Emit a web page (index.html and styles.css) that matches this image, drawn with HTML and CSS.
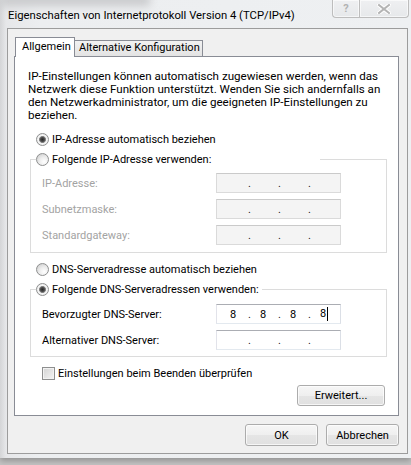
FILE: index.html
```html
<!DOCTYPE html>
<html lang="de">
<head>
  <meta charset="UTF-8" />
  <title>Eigenschaften von Internetprotokoll Version 4 (TCP/IPv4)</title>
  <link rel="stylesheet" href="styles.css">
</head>
<body>
  <div class="window">
    <div class="titlebar">
      <div class="glass-blur"></div>
      <span class="title">Eigenschaften von Internetprotokoll Version 4 (TCP/IPv4)</span>
      <div class="caption-btns">
        <div class="cap help">?</div>
        <div class="cap close">
          <svg width="14" height="10" viewBox="0 0 14 10">
            <path d="M2 1 L12 9 M12 1 L2 9" stroke="#ffffff" stroke-width="4" stroke-linecap="square" />
            <path d="M2 1 L12 9 M12 1 L2 9" stroke="#b4b4b4" stroke-width="2" stroke-linecap="square" />
          </svg>
        </div>
      </div>
    </div>

    <div class="client">
      <div class="tabs">
        <div class="tab active">Allgemein</div>
        <div class="tab">Alternative Konfiguration</div>
      </div>

      <div class="panel">
        <p class="intro">IP-Einstellungen können automatisch zugewiesen werden, wenn das<br>Netzwerk diese Funktion unterstützt. Wenden Sie sich andernfalls an<br>den Netzwerkadministrator, um die geeigneten IP-Einstellungen zu<br>beziehen.</p>

        <div class="option"><span class="radio on"></span>IP-Adresse automatisch beziehen</div>

        <fieldset class="group">
          <legend class="option ip-legend"><span class="radio"></span>Folgende IP-Adresse verwenden:</legend>
          <div class="field disabled">
            <span class="label">IP-Adresse:</span>
            <span class="ipbox"><span class="part"></span><span class="dot">.</span><span class="part"></span><span class="dot">.</span><span class="part"></span><span class="dot">.</span><span class="part"></span></span>
          </div>
          <div class="field disabled">
            <span class="label">Subnetzmaske:</span>
            <span class="ipbox"><span class="part"></span><span class="dot">.</span><span class="part"></span><span class="dot">.</span><span class="part"></span><span class="dot">.</span><span class="part"></span></span>
          </div>
          <div class="field disabled">
            <span class="label">Standardgateway:</span>
            <span class="ipbox"><span class="part"></span><span class="dot">.</span><span class="part"></span><span class="dot">.</span><span class="part"></span><span class="dot">.</span><span class="part"></span></span>
          </div>
        </fieldset>

        <div class="option dns-auto"><span class="radio"></span>DNS-Serveradresse automatisch beziehen</div>

        <fieldset class="group dns">
          <legend class="option dns-legend"><span class="radio on"></span>Folgende DNS-Serveradressen verwenden:</legend>
          <div class="field">
            <span class="label">Bevorzugter DNS-Server:</span>
            <span class="ipbox"><span class="part">8</span><span class="dot">.</span><span class="part">8</span><span class="dot">.</span><span class="part">8</span><span class="dot">.</span><span class="part">8<span class="caret"></span></span></span>
          </div>
          <div class="field">
            <span class="label">Alternativer DNS-Server:</span>
            <span class="ipbox"><span class="part"></span><span class="dot">.</span><span class="part"></span><span class="dot">.</span><span class="part"></span><span class="dot">.</span><span class="part"></span></span>
          </div>
        </fieldset>

        <div class="check-row"><span class="check"></span>Einstellungen beim Beenden überprüfen</div>

        <div class="panel-actions">
          <button class="btn wide">Erweitert...</button>
        </div>
      </div>

      <div class="dialog-actions">
        <button class="btn">OK</button>
        <button class="btn">Abbrechen</button>
      </div>
    </div>
  </div>
</body>
</html>
```

FILE: styles.css
```css
* {
  box-sizing: border-box;
  margin: 0;
  padding: 0;
}

body {
  width: 411px;
  height: 465px;
  overflow: hidden;
  font-family: Roboto, 'Noto Sans', sans-serif;
  font-size: 11px;
  color: #000;
  background: #c4c4c4;
}

/* glass frame */
.window {
  width: 411px;
  height: 458px;
  background: linear-gradient(90deg, #d4d5d7 0, #e6e7e9 6px, #eceef0 40px, #eef0f2 100%);
  box-shadow: 0 3px 6px rgba(0, 0, 0, 0.25);
  overflow: hidden;
}

.titlebar {
  position: relative;
  height: 28px;
  display: flex;
  align-items: flex-start;
}

.glass-blur {
  position: absolute;
  left: 0;
  top: -6px;
  width: 150px;
  height: 12px;
  background: #c9cacc;
  filter: blur(4px);
}

.title {
  position: relative;
  margin: 8px 0 0 8px;
  font-size: 11.3px;
  line-height: 16px;
  white-space: nowrap;
}

.caption-btns {
  position: relative;
  display: flex;
  margin: 0 2px 0 auto;
}

.cap {
  height: 18px;
  border: 1px solid #bdbdbd;
  border-top: none;
  background: linear-gradient(#eff0f2, #e6e8ea);
  box-shadow: inset 0 0 0 1px rgba(255, 255, 255, 0.6);
  display: flex;
  align-items: center;
  justify-content: center;
  color: #b2b2b2;
  font-weight: bold;
  font-size: 11px;
}

.cap.help {
  width: 27px;
  border-right: none;
  border-radius: 0 0 0 4px;
}

.cap.close {
  width: 50px;
  border-radius: 0 0 4px 0;
}

/* client area */
.client {
  width: 401px;
  height: 426px;
  margin-left: 7px;
  background: #f0f0f0;
  border: 1px solid #9c9c9c;
}

.tabs {
  display: flex;
  align-items: flex-end;
  margin: 8px 0 0 7px;
  position: relative;
  z-index: 1;
}

.tab {
  width: 129px;
  height: 16px;
  padding: 0 0 0 4px;
  line-height: 14px;
  border: 1px solid #898c95;
  border-bottom: none;
  background: linear-gradient(#f2f2f2, #e3e3e3);
  margin-left: -1px;
  white-space: nowrap;
}

.tab.active {
  height: 20px;
  width: 60px;
  margin-left: 0;
  margin-bottom: -1px;
  padding: 2px 0 0 6px;
  background: #fff;
  position: relative;
  z-index: 2;
}

.panel {
  width: 385px;
  height: 360px;
  margin-left: 6px;
  background: #fff;
  border: 1px solid #898c95;
  padding: 13px 13px 0 0;
  display: flex;
  flex-direction: column;
}

.intro {
  margin-left: 13px;
  font-size: 11.6px;
  line-height: 13px;
  white-space: nowrap;
}

.option {
  display: flex;
  align-items: center;
  height: 20px;
  margin: 7px 0 0 21px;
  white-space: nowrap;
}

.radio {
  width: 13px;
  height: 13px;
  margin-right: 3px;
  border-radius: 50%;
  border: 1px solid #8e8f8f;
  background: radial-gradient(circle at 65% 70%, #ffffff 0, #ececec 45%, #c6c6c6 100%);
  flex-shrink: 0;
}

.radio.on {
  background: radial-gradient(circle at 50% 50%, #2a2a2a 0, #4a4a4a 2px, #8c8c8c 3.2px, #f6f6f6 3.8px, #e2e2e2 100%);
}

.group {
  width: 357px;
  margin-left: 15px;
  border: 1px solid #dcdcdc;
  padding: 4px 0 7px 0;
}

.group legend.option {
  margin: 0 0 0 5px;
  padding: 0;
}

.ip-legend {
  width: 284px;
}

.dns-legend {
  width: 226px;
}

.option.dns-auto {
  margin-top: 6px;
}

.group.dns {
  padding: 5px 0 6px 0;
}

.field {
  display: flex;
  align-items: center;
  height: 20px;
  margin-left: 11px;
}

.field + .field {
  margin-top: 6px;
}

.label {
  width: 174px;
}

.field.disabled .label {
  color: #a3a3a3;
}

.ipbox {
  width: 125px;
  height: 20px;
  display: flex;
  align-items: center;
  padding-left: 4px;
  background: #fff;
  border: 1px solid;
  border-color: #abadb3 #dbdfe6 #e3e9ef #e2e3ea;
}

.field.disabled .ipbox {
  background: #f4f4f4;
  border-color: #cacaca #dadada #dadada #dadada;
}

.part {
  width: 24px;
  text-align: center;
  white-space: nowrap;
}

.dot {
  width: 6px;
  text-align: right;
  color: #222;
}

.caret {
  display: inline-block;
  width: 1px;
  height: 14px;
  margin-left: 1px;
  margin-right: -2px;
  background: #000;
  vertical-align: middle;
}

.check-row {
  display: flex;
  align-items: center;
  height: 20px;
  margin: 6px 0 0 27px;
}

.check {
  width: 13px;
  height: 13px;
  margin-right: 3px;
  border: 1px solid #8e8f8f;
  background: linear-gradient(135deg, #d3d3d3, #f4f4f4);
  box-shadow: inset 0 0 0 1px #f2f2f2;
}

.panel-actions {
  display: flex;
  justify-content: flex-end;
  margin-top: 2px;
}

.btn {
  width: 73px;
  height: 22px;
  font-family: inherit;
  font-size: 11px;
  color: #000;
  border: 1px solid #acacac;
  border-radius: 3px;
  background: linear-gradient(#f6f6f6 0, #efefef 50%, #e5e5e5 51%, #e0e0e0 100%);
  box-shadow: inset 0 0 0 1px rgba(255, 255, 255, 0.7);
}

.btn.wide {
  width: 88px;
  height: 21px;
}

.dialog-actions {
  display: flex;
  justify-content: flex-end;
  gap: 8px;
  margin: 8px 8px 0 0;
}
```
